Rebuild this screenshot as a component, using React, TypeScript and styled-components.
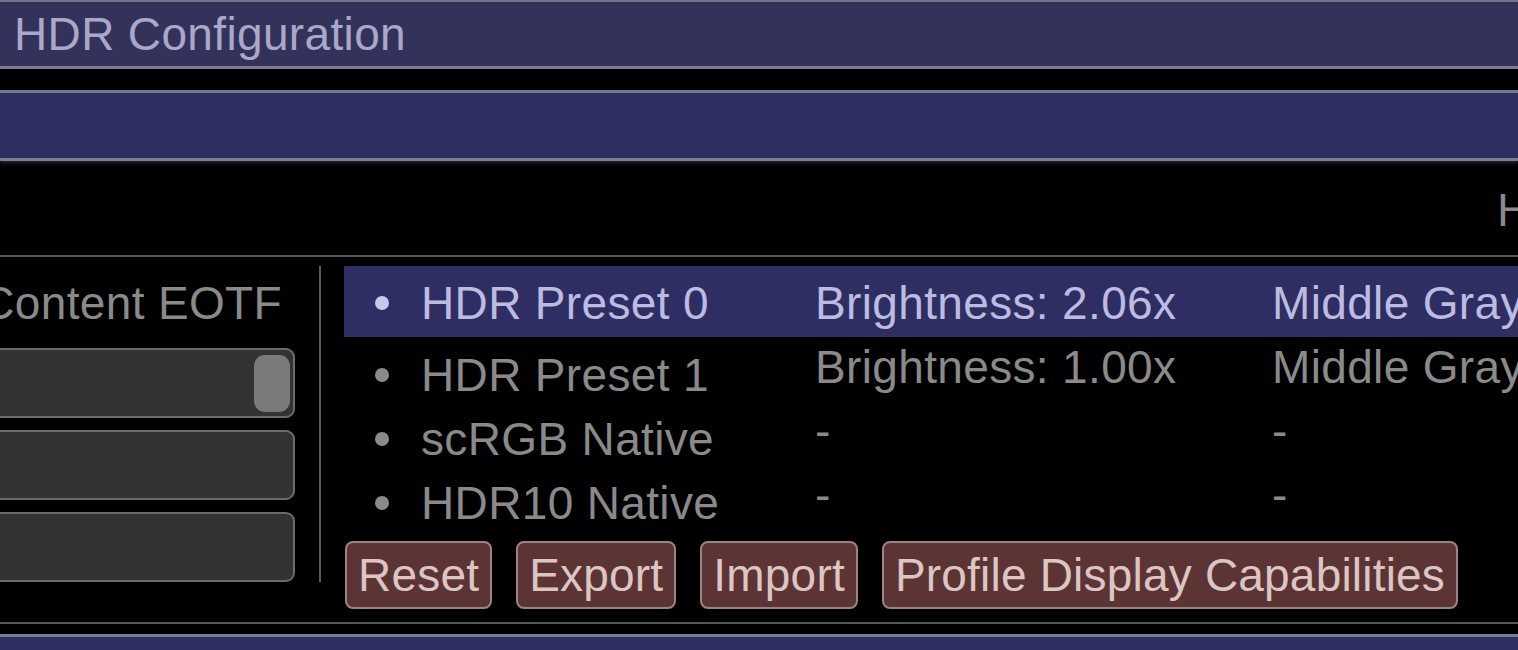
import React from "react";
import styled, { createGlobalStyle } from "styled-components";

const GlobalStyle = createGlobalStyle`
  html, body {
    margin: 0;
    padding: 0;
    background: #000;
    overflow: hidden;
  }
  body {
    font-family: "Liberation Sans", Arial, sans-serif;
  }
`;

const Window = styled.div`
  width: 1518px;
  height: 650px;
  background: #000;
  overflow: hidden;
  display: flex;
  flex-direction: column;
  font-family: "Liberation Sans", Arial, sans-serif;
  font-size: 46px;
  line-height: 64px;
  letter-spacing: 0.35px;
  color: #8a8a8a;
`;

const TitleBar = styled.div`
  height: 64px;
  flex: none;
  background: #33325a;
  border-top: 2px solid #75738e;
  border-bottom: 3px solid #7b7994;
  color: #a9a8c8;
  padding-left: 14px;
  white-space: nowrap;
`;

const HeaderBar = styled.div`
  height: 65px;
  flex: none;
  margin-top: 21px;
  background: #2f2e60;
  border-top: 3px solid #77758f;
  border-bottom: 3px solid #7b7994;
  box-shadow: 0 2px 4px rgba(90, 90, 100, 0.45);
`;

const InfoRow = styled.div`
  height: 64px;
  flex: none;
  padding: 17px 0 13px 1497px;
  border-bottom: 2px solid #5a5a5a;
  white-space: nowrap;
  overflow: hidden;
  color: #8a8a8a;
`;

const Content = styled.div`
  display: flex;
  align-items: flex-start;
  padding-top: 9px;
  flex: none;
`;

const LeftColumn = styled.div`
  display: flex;
  flex-direction: column;
  flex: none;
  width: 315px;
  margin-left: -20px;
  padding-right: 24px;
  border-right: 2px solid #5a5a5a;
`;

const Label = styled.div`
  padding-top: 5px;
  padding-right: 13px;
  text-align: right;
  white-space: nowrap;
  color: #8a8a8a;
`;

const FieldStack = styled.div`
  display: flex;
  flex-direction: column;
  gap: 12px;
  margin-top: 13px;
`;

const Field = styled.div`
  height: 66px;
  background: #333333;
  border: 2px solid #6b6b6b;
  border-radius: 9px;
  display: flex;
  justify-content: flex-end;
  align-items: center;
  padding-right: 3px;
`;

const Grab = styled.div`
  width: 36px;
  height: 57px;
  border-radius: 11px;
  background: #7a7a7a;
`;

const RightArea = styled.div`
  flex: 1;
  min-width: 0;
  margin-left: 23px;
  display: grid;
  grid-template-columns: 456px 457px 1fr;
`;

const NameColumn = styled.div`
  display: flex;
  flex-direction: column;
`;

const NameItem = styled.div<{ $selected?: boolean }>`
  display: flex;
  align-items: center;
  height: 64px;
  white-space: nowrap;
  padding: ${(p) => (p.$selected ? "5px 0 2px" : "0")};
  margin-bottom: ${(p) => (p.$selected ? "6px" : "0")};
  background: ${(p) => (p.$selected ? "#2f2e62" : "transparent")};
  color: ${(p) => (p.$selected ? "#bcbbe2" : "#8a8a8a")};
`;

const Bullet = styled.span<{ $selected?: boolean }>`
  width: 14px;
  height: 14px;
  border-radius: 50%;
  margin: 0 32px 0 31px;
  flex: none;
  background: ${(p) => (p.$selected ? "#c9c8ec" : "#8a8a8a")};
`;

const ValueColumn = styled.div`
  display: flex;
  flex-direction: column;
  min-width: 0;
  overflow: hidden;
`;

const ValueItem = styled.div<{ $selected?: boolean }>`
  height: 64px;
  padding: ${(p) => (p.$selected ? "5px 0 2px 15px" : "0 0 0 15px")};
  margin-bottom: ${(p) => (p.$selected ? "-2px" : "0")};
  white-space: nowrap;
  background: ${(p) => (p.$selected ? "#2f2e62" : "transparent")};
  color: ${(p) => (p.$selected ? "#bcbbe2" : "#8a8a8a")};
`;

const ButtonRow = styled.div`
  grid-column: 1 / -1;
  display: flex;
  gap: 24px;
  margin-top: 6px;
  padding-left: 1px;
`;

const Button = styled.button`
  height: 68px;
  padding: 0 11px;
  border: 2px solid #9d8282;
  border-radius: 8px;
  background: #5d3434;
  color: #dbc5c5;
  font-family: "Liberation Sans", Arial, sans-serif;
  font-size: 46px;
  line-height: 64px;
  letter-spacing: 0.2px;
  white-space: nowrap;
  cursor: pointer;
`;

const BottomRule = styled.div`
  flex: none;
  margin-top: 13px;
  border-top: 2px solid #575757;
`;

const NextHeader = styled.div`
  flex: 1;
  margin-top: 10px;
  border-top: 3px solid #7b7994;
  background: #2f2e60;
`;

const presets = [
  { name: "HDR Preset 0", brightness: "Brightness: 2.06x", gray: "Middle Gray Luminance" },
  { name: "HDR Preset 1", brightness: "Brightness: 1.00x", gray: "Middle Gray Luminance" },
  { name: "scRGB Native", brightness: "-", gray: "-" },
  { name: "HDR10 Native", brightness: "-", gray: "-" },
];

export default function App() {
  return (
    <>
      <GlobalStyle />
      <Window>
        <TitleBar>HDR Configuration</TitleBar>
        <HeaderBar />
        <InfoRow>HDR Luminance</InfoRow>
        <Content>
          <LeftColumn>
            <Label>Content EOTF</Label>
            <FieldStack>
              <Field>
                <Grab />
              </Field>
              <Field />
              <Field />
            </FieldStack>
          </LeftColumn>
          <RightArea>
            <NameColumn>
              {presets.map((p, i) => (
                <NameItem key={p.name} $selected={i === 0}>
                  <Bullet $selected={i === 0} />
                  {p.name}
                </NameItem>
              ))}
            </NameColumn>
            <ValueColumn>
              {presets.map((p, i) => (
                <ValueItem key={p.name} $selected={i === 0}>
                  {p.brightness}
                </ValueItem>
              ))}
            </ValueColumn>
            <ValueColumn>
              {presets.map((p, i) => (
                <ValueItem key={p.name} $selected={i === 0}>
                  {p.gray}
                </ValueItem>
              ))}
            </ValueColumn>
            <ButtonRow>
              <Button>Reset</Button>
              <Button>Export</Button>
              <Button>Import</Button>
              <Button>Profile Display Capabilities</Button>
            </ButtonRow>
          </RightArea>
        </Content>
        <BottomRule />
        <NextHeader />
      </Window>
    </>
  );
}
